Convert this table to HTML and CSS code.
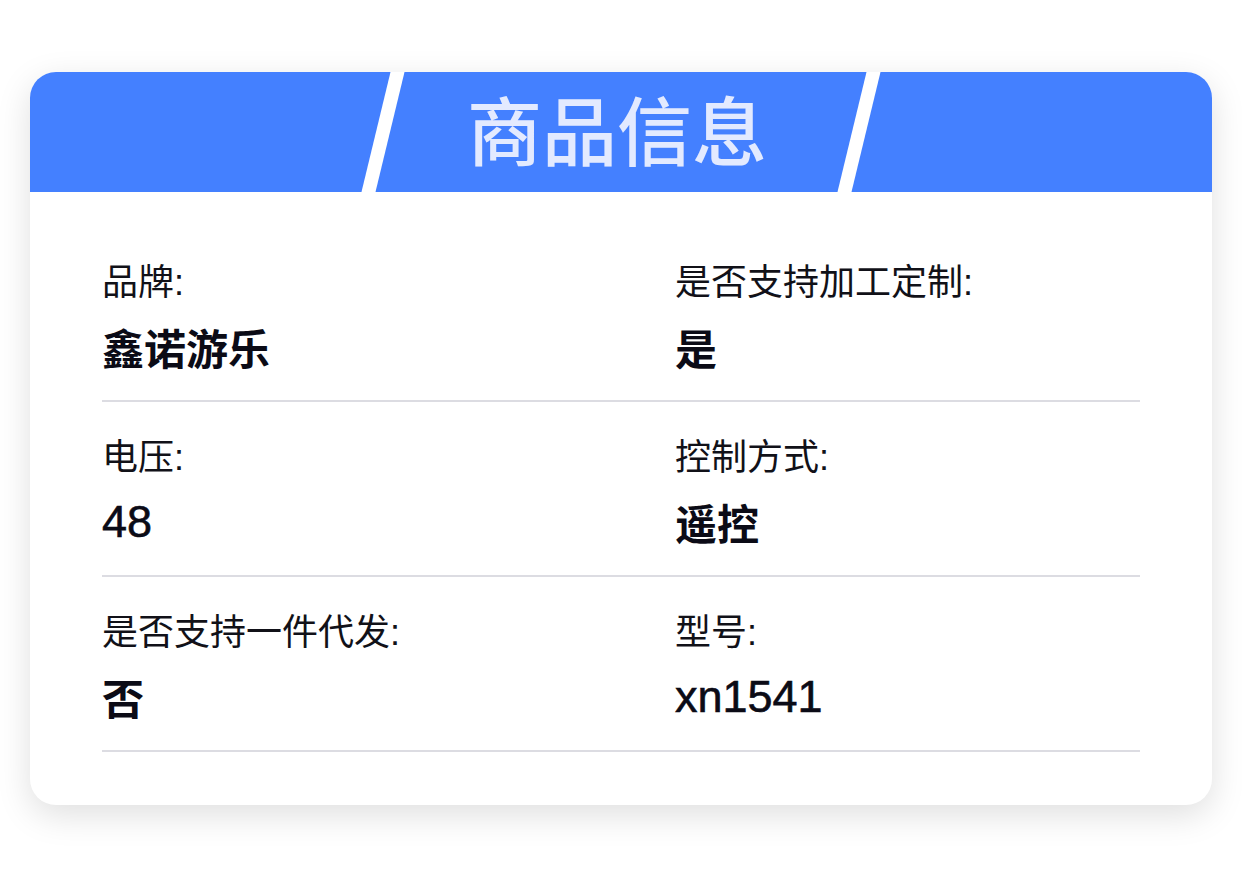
FILE: index.html
```html
<!DOCTYPE html>
<html lang="zh-CN">
<head>
<meta charset="utf-8">
<title>商品信息</title>
<link rel="stylesheet" href="styles.css">
</head>
<body>
<section class="card">
  <header class="card-head">
    <h1 class="title">商品信息</h1>
  </header>
  <div class="card-body">
    <div class="row">
      <div class="cell">
        <div class="label">品牌:</div>
        <div class="val">鑫诺游乐</div>
      </div>
      <div class="cell">
        <div class="label">是否支持加工定制:</div>
        <div class="val">是</div>
      </div>
    </div>
    <div class="row">
      <div class="cell">
        <div class="label">电压:</div>
        <div class="val num">48</div>
      </div>
      <div class="cell">
        <div class="label">控制方式:</div>
        <div class="val">遥控</div>
      </div>
    </div>
    <div class="row">
      <div class="cell">
        <div class="label">是否支持一件代发:</div>
        <div class="val">否</div>
      </div>
      <div class="cell">
        <div class="label">型号:</div>
        <div class="val num">xn1541</div>
      </div>
    </div>
  </div>
</section>
</body>
</html>
```

FILE: styles.css
```css
* { box-sizing: border-box; }

html, body {
  margin: 0;
  padding: 0;
  background: #ffffff;
}

body {
  font-family: "Liberation Sans", "Noto Sans CJK SC", sans-serif;
  color: #111118;
  padding: 72px 30px 72px 30px;
  min-height: 877px;
}

.card {
  width: 1182px;
  background: #ffffff;
  border-radius: 26px;
  overflow: hidden;
  box-shadow: 0 10px 34px rgba(0, 0, 0, 0.13);
}

.card-head {
  position: relative;
  height: 120px;
  background: #4480ff;
  display: flex;
  align-items: center;
  justify-content: center;
}

.card-head::before,
.card-head::after {
  content: "";
  position: absolute;
  top: 0;
  width: 14px;
  height: 120px;
  background: #ffffff;
  transform: skewX(-13.6deg);
}

.card-head::before { left: 346px; }
.card-head::after { left: 822px; }

.title {
  margin: 0;
  font-family: "Noto Sans CJK SC", sans-serif;
  font-weight: 500;
  font-size: 75px;
  line-height: 1;
  color: #e3eaff;
  transform: translate(-4px, -5px);
}

.card-body {
  padding: 35px 72px 53px 72px;
}

.row {
  display: grid;
  grid-template-columns: 573px 1fr;
  border-bottom: 2px solid #dcdce2;
  padding: 38px 0 29px 0;
}

.cell {
  display: flex;
  flex-direction: column;
  gap: 22px;
}

.label {
  font-size: 36px;
  line-height: 36px;
  font-weight: 400;
  color: #111118;
  white-space: nowrap;
}

.val {
  font-family: "Noto Sans CJK SC", sans-serif;
  font-size: 42px;
  line-height: 48px;
  font-weight: 700;
  color: #0b0b16;
  white-space: nowrap;
}

.val.num {
  font-family: "Liberation Sans", sans-serif;
  font-size: 45px;
  font-weight: 400;
  -webkit-text-stroke: 0.6px #0b0b16;
}
```
